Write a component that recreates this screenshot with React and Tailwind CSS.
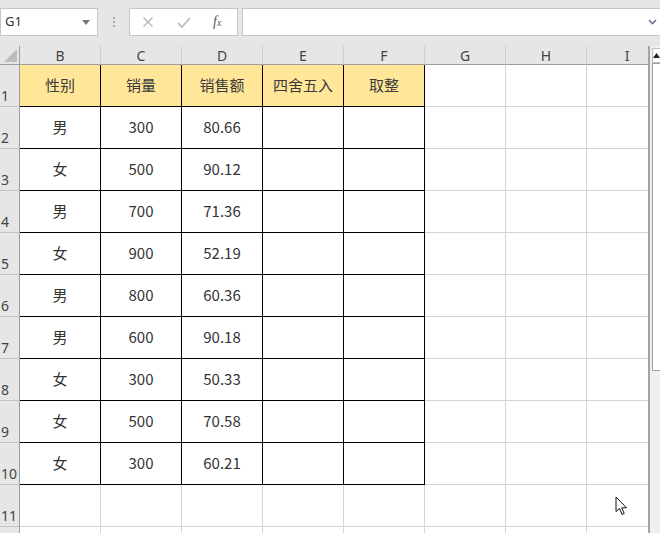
import React from "react"

const cols = ["B", "C", "D", "E", "F", "G", "H", "I"]

const header = ["性别", "销量", "销售额", "四舍五入", "取整"]

const rows = [
  ["男", "300", "80.66"],
  ["女", "500", "90.12"],
  ["男", "700", "71.36"],
  ["女", "900", "52.19"],
  ["男", "800", "60.36"],
  ["男", "600", "90.18"],
  ["女", "300", "50.33"],
  ["女", "500", "70.58"],
  ["女", "300", "60.21"],
]

const cellFont = { fontFamily: '"Noto Sans CJK SC", "Noto Sans", sans-serif' }

function Cell({ r, c, children }) {
  // r: 1-based row, c: 0-based column index (0 = B)
  const inTable = r <= 10 && c <= 4
  const yellow = r === 1 && c <= 4
  return (
    <div
      className={
        "w-[81px] shrink-0 h-full flex items-center justify-center border-r border-b text-[15px] " +
        (inTable ? "border-r-black border-b-black " : "border-r-[#d4d4d4] border-b-[#d4d4d4] ") +
        (yellow ? "bg-[#ffe699] text-[#3b3b3b]" : "bg-white text-[#333]")
      }
      style={cellFont}
    >
      {inTable ? children : null}
    </div>
  )
}

function Row({ r, label, values }) {
  return (
    <div className="flex h-[42px]">
      <div
        className="w-[20px] shrink-0 bg-[#e6e6e6] border-r border-r-[#9e9e9e] border-b border-b-[#c4c4c4] flex items-end pl-[1px] pb-[1px] text-[14px] leading-[18px] text-[#444]"
        style={{ fontFamily: '"Noto Sans", sans-serif' }}
      >
        {label}
      </div>
      {cols.map((col, c) => (
        <Cell key={col} r={r} c={c}>
          {values ? values[c] : null}
        </Cell>
      ))}
    </div>
  )
}

function Cursor() {
  return (
    <svg className="absolute left-[615px] top-[496px]" width="13" height="20" viewBox="0 0 13 20">
      <path
        d="M1 1 L1 15.5 L4.5 12.5 L7 18.5 L9.2 17.5 L6.8 11.8 L11.5 11.8 Z"
        fill="white"
        stroke="#111"
        strokeWidth="1"
        strokeLinejoin="round"
      />
    </svg>
  )
}

export default function App() {
  return (
    <div
      className="relative w-[660px] h-[533px] overflow-hidden bg-[#e6e6e6]"
      style={{ fontFamily: '"Noto Sans", sans-serif' }}
    >
      {/* formula bar */}
      <div className="h-[46px] flex items-start pt-[8px]">
        <div className="w-[98px] h-[28px] shrink-0 bg-white border border-[#c6c6c6] flex items-center justify-between pl-[4px] pr-[7px]">
          <span className="text-[13px] text-[#333]">G1</span>
          <svg width="8" height="5" viewBox="0 0 8 5">
            <path d="M0 0 H8 L4 5 Z" fill="#7a7a7a" />
          </svg>
        </div>
        <div className="w-[31px] h-[28px] shrink-0 flex flex-col items-center justify-center gap-[2px]">
          <span className="w-[2px] h-[2px] bg-[#a8a8a8]" />
          <span className="w-[2px] h-[2px] bg-[#a8a8a8]" />
          <span className="w-[2px] h-[2px] bg-[#a8a8a8]" />
        </div>
        <div className="w-[109px] h-[28px] shrink-0 bg-white border border-[#c6c6c6] flex items-center pl-[12px]">
          <svg width="12" height="12" viewBox="0 0 12 12">
            <path d="M1.5 1.5 L10.5 10.5 M10.5 1.5 L1.5 10.5" stroke="#b4b4b4" strokeWidth="1.3" />
          </svg>
          <svg className="ml-[23px]" width="14" height="11" viewBox="0 0 14 11">
            <path d="M1 6 L5 10 L13 1" fill="none" stroke="#bdbdbd" strokeWidth="1.8" />
          </svg>
          <span
            className="ml-[22px] text-[14px] italic text-[#555] leading-none"
            style={{ fontFamily: '"Liberation Serif", serif' }}
          >
            f<span className="text-[10px]">x</span>
          </span>
        </div>
        <div className="w-[424px] h-[28px] shrink-0 ml-[4px] bg-white border border-[#c6c6c6] flex items-center pl-[405px]">
          <svg width="9" height="6" viewBox="0 0 9 6">
            <path d="M1 1 L4.5 4.5 L8 1" fill="none" stroke="#7b6a8a" strokeWidth="1.6" />
          </svg>
        </div>
      </div>

      <div className="flex">
        {/* grid */}
        <div className="w-[648px] shrink-0 overflow-hidden">
          <div className="flex h-[19px]">
            <div className="w-[20px] shrink-0 border-r border-b border-[#9e9e9e] bg-[#e6e6e6] flex items-end justify-end pr-[2px] pb-[2px]">
              <svg width="13" height="13" viewBox="0 0 13 13">
                <path d="M13 0 V13 H0 Z" fill="#bdbdbd" />
              </svg>
            </div>
            {cols.map((col) => (
              <div
                key={col}
                className="w-[81px] shrink-0 border-b border-b-[#9e9e9e] border-r border-r-[#d0d0d0] flex items-center justify-center text-[14px] text-[#444]"
              >
                {col}
              </div>
            ))}
          </div>
          <Row r={1} label={1} values={header} />
          {rows.map((v, i) => (
            <Row key={i} r={i + 2} label={i + 2} values={v} />
          ))}
          <Row r={11} label={11} />
          <Row r={12} />
        </div>

        {/* scrollbar */}
        <div className="w-[12px] h-[487px] shrink-0 bg-[#f0f0f0] border-l-2 border-l-[#a4a4a4] pl-[2px] pt-[2px]">
          <div className="h-[15px] bg-white border border-[#bdbdbd] border-r-0 flex items-center justify-center">
            <svg width="7" height="5" viewBox="0 0 7 5">
              <path d="M3.5 0 L7 5 H0 Z" fill="#222" />
            </svg>
          </div>
          <div className="h-[308px] bg-white border border-[#a0a0a0] border-r-0" />
        </div>
      </div>

      <Cursor />
    </div>
  )
}
